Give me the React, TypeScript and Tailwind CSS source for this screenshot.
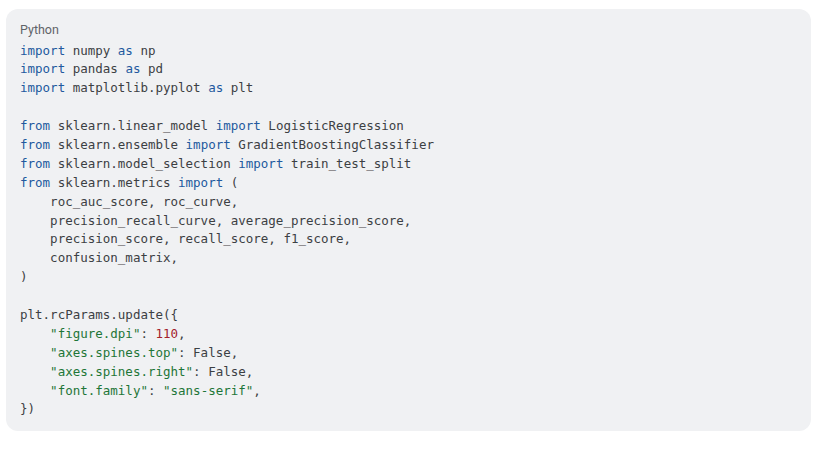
import React from "react";

type Tok = [string, string?];

const KW = "text-[#22599e]";
const STR = "text-[#1e7638]";
const NUM = "text-[#a3222a]";

const lines: Tok[][] = [
  [["import", KW], [" numpy "], ["as", KW], [" np"]],
  [["import", KW], [" pandas "], ["as", KW], [" pd"]],
  [["import", KW], [" matplotlib.pyplot "], ["as", KW], [" plt"]],
  [],
  [["from", KW], [" sklearn.linear_model "], ["import", KW], [" LogisticRegression"]],
  [["from", KW], [" sklearn.ensemble "], ["import", KW], [" GradientBoostingClassifier"]],
  [["from", KW], [" sklearn.model_selection "], ["import", KW], [" train_test_split"]],
  [["from", KW], [" sklearn.metrics "], ["import", KW], [" ("]],
  [["    roc_auc_score, roc_curve,"]],
  [["    precision_recall_curve, average_precision_score,"]],
  [["    precision_score, recall_score, f1_score,"]],
  [["    confusion_matrix,"]],
  [[")"]],
  [],
  [["plt.rcParams.update({"]],
  [["    "], ['"figure.dpi"', STR], [": "], ["110", NUM], [","]],
  [["    "], ['"axes.spines.top"', STR], [": False,"]],
  [["    "], ['"axes.spines.right"', STR], [": False,"]],
  [["    "], ['"font.family"', STR], [": "], ['"sans-serif"', STR], [","]],
  [["})"]],
];

export default function App() {
  return (
    <div className="w-[820px] h-[461px] bg-white pt-[9px] pl-[6px]">
      {/* Code block */}
      <div className="w-[805px] h-[422px] rounded-[12px] bg-[#f0f1f3] px-[14px] pt-[13px]">
        <div className="text-[12.5px] leading-[16px] text-[#5f6368] font-['Roboto',sans-serif] mb-[3.5px]">
          Python
        </div>
        <pre className="font-['DejaVu_Sans_Mono',monospace] text-[12.5px] leading-[18.9px] text-[#3c4043] m-0">
          {lines.map((line, i) => (
            <div key={i} className="h-[18.9px] whitespace-pre">
              {line.map(([t, c], j) => (
                <span key={j} className={c}>
                  {t}
                </span>
              ))}
            </div>
          ))}
        </pre>
      </div>
    </div>
  );
}
